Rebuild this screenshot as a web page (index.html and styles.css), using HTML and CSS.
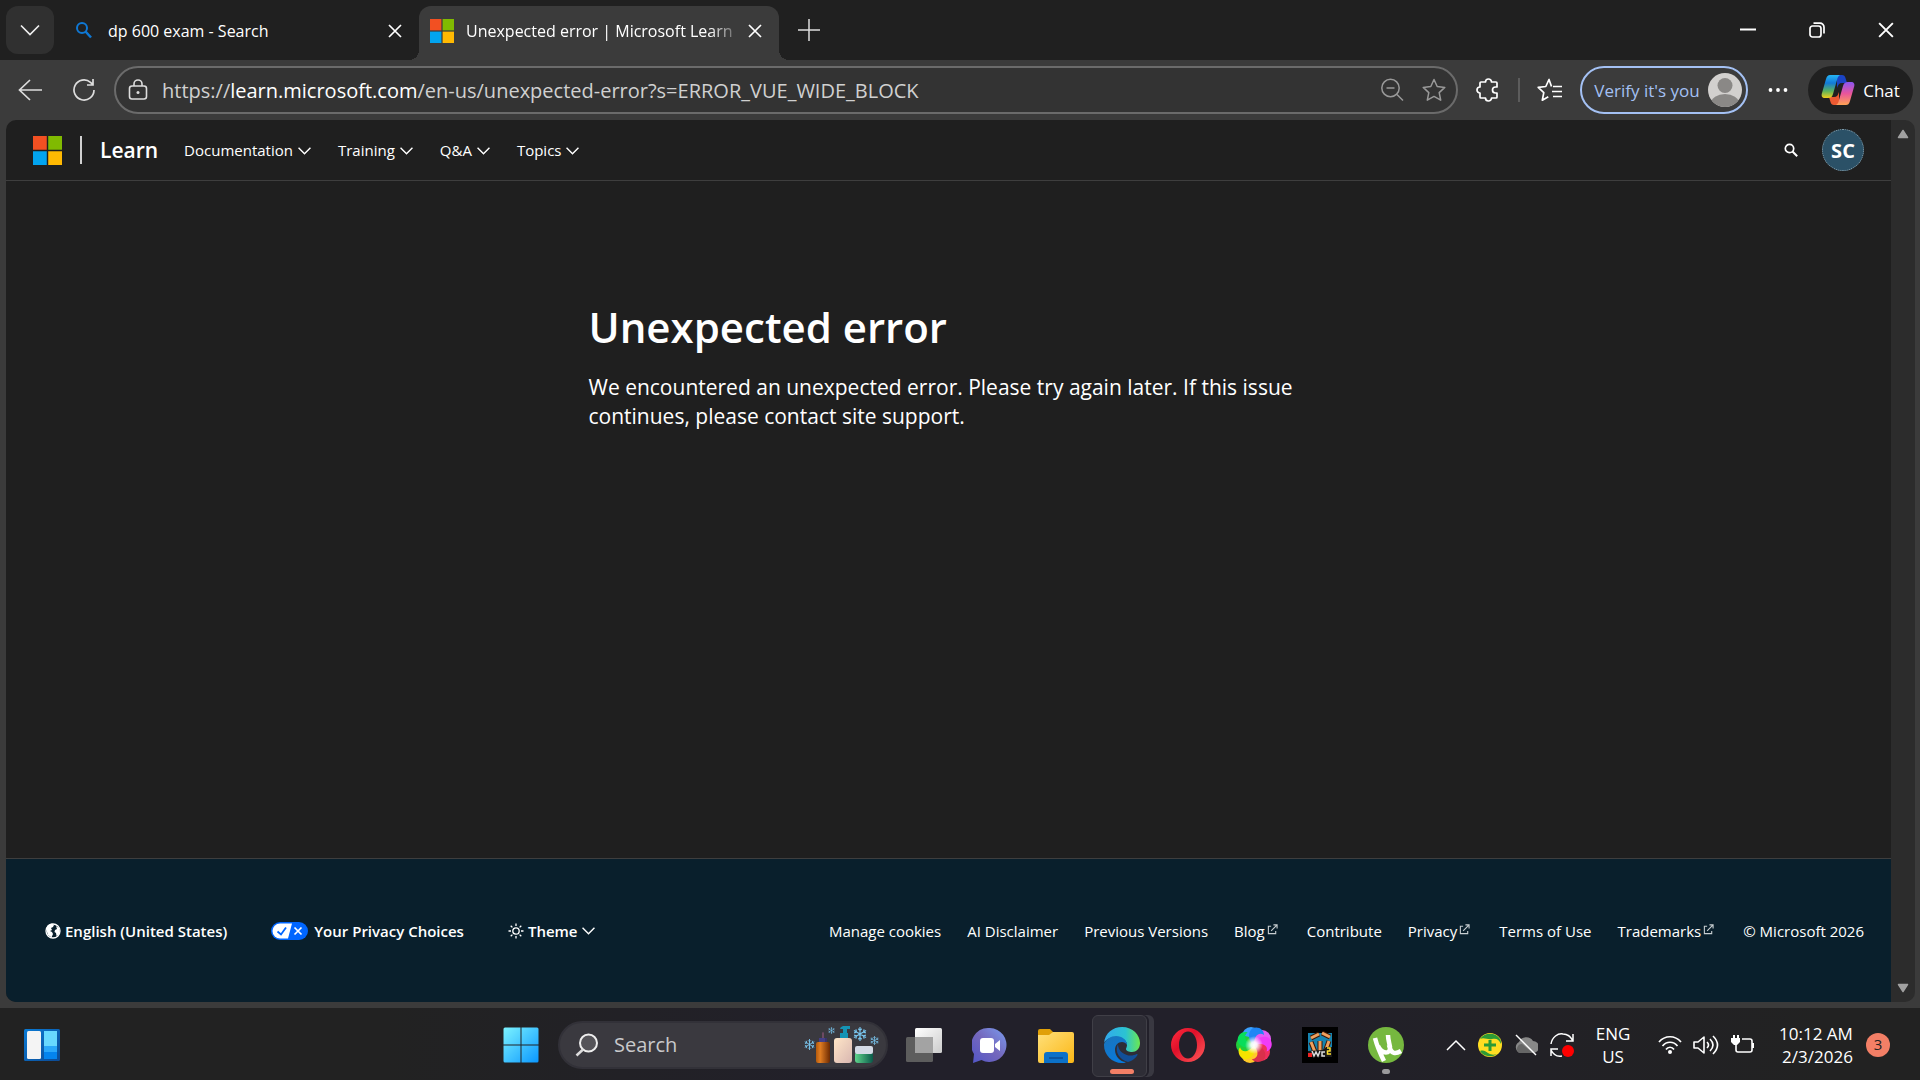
FILE: index.html
```html
<!DOCTYPE html>
<html lang="en-us">
<head>
    <meta charset="UTF-8">
    <meta name="viewport" content="width=device-width, initial-scale=1.0">
    <title>Unexpected error | Microsoft Learn</title>
    <link rel="stylesheet" href="styles.css">
</head>
<body>
    <!-- icons used more than once -->
    <svg class="sprite" width="0" height="0" aria-hidden="true">
        <symbol id="chevron" viewBox="0 0 12 12"><path d="M.5 3.500L6 9l5.500-5.500" fill="none" stroke="currentColor" stroke-width="1.300"/></symbol>
        <symbol id="close" viewBox="0 0 14 14"><path d="M1 1l12 12M13 1L1 13" fill="none" stroke="currentColor" stroke-width="1.700"/></symbol>
        <symbol id="ms-logo" viewBox="0 0 24 24">
            <path fill="#f25022" d="M0 0h11.400v11.400H0z"/><path fill="#80ba01" d="M12.600 0H24v11.400H12.600z"/>
            <path fill="#02a4ef" d="M0 12.600h11.400V24H0z"/><path fill="#ffb902" d="M12.600 12.600H24V24H12.600z"/>
        </symbol>
        <symbol id="external" viewBox="0 0 12 12"><path d="M4.500 2.500h-3v8h8v-3M7 1h4v4M11 1L4.500 7.500" fill="none" stroke="#c8ced1" stroke-width="1.200"/></symbol>
        <symbol id="snow" viewBox="0 0 12 12"><path d="M6 0v12M.8 3l10.400 6M11.200 3L.8 9M4.500 1.500L6 3l1.500-1.500M4.500 10.500L6 9l1.500 1.500M1 5l2-.7L2.500 2M11 5l-2-.7.500-2.300M1 7l2 .7-.5 2.300M11 7l-2 .7.500 2.300" fill="none" stroke="#79c6ef" stroke-width="1"/></symbol>
        <symbol id="petal" viewBox="0 0 36 36"><path d="M18 18C12 14 11 5 17 1c6-2 11 2 11 7-4-3-10-1-10 10z"/></symbol>
    </svg>

    <header class="tabs">
        <button class="tab-list" aria-label="Search tabs"><svg width="20" height="20" viewBox="0 0 20 20"><path d="M1 5.500l9 9 9-9" fill="none" stroke="#eee" stroke-width="1.700"/></svg></button>
        <div class="tab">
            <svg class="tab-icon" width="24" height="24" viewBox="0 0 24 24"><circle cx="10" cy="9" r="5" fill="none" stroke="#0f78d4" stroke-width="2"/><path d="M13.500 12.500l5.500 6" stroke="#0f78d4" stroke-width="2.500"/></svg>
            <span class="tab-title">dp 600 exam - Search</span>
            <button class="tab-close" aria-label="Close tab"><svg width="14" height="14"><use href="#close"/></svg></button>
        </div>
        <div class="tab active">
            <svg class="tab-icon" width="24" height="24"><use href="#ms-logo"/></svg>
            <span class="tab-title">Unexpected error | Microsoft Learn</span>
            <button class="tab-close" aria-label="Close tab"><svg width="14" height="14"><use href="#close"/></svg></button>
        </div>
        <button class="new-tab" aria-label="New tab"><svg width="22" height="22" viewBox="0 0 22 22"><path d="M11 0v22M0 11h22" stroke="#ddd" stroke-width="1.500"/></svg></button>
        <div class="window-buttons">
            <button aria-label="Minimize"><svg width="16" height="16" viewBox="0 0 16 16"><path d="M0 7.500h16" stroke="#fff" stroke-width="2"/></svg></button>
            <button aria-label="Restore"><svg width="16" height="16" viewBox="0 0 16 16"><rect x="1" y="4" width="11" height="11" rx="2.500" fill="none" stroke="#fff" stroke-width="1.700"/><path d="M4.500 1.200H11a4 4 0 0 1 4 4v6.300" fill="none" stroke="#fff" stroke-width="1.700"/></svg></button>
            <button aria-label="Close"><svg width="16" height="16"><use href="#close"/></svg></button>
        </div>
    </header>

    <nav class="toolbar">
        <button aria-label="Back"><svg width="24" height="24" viewBox="0 0 24 24"><path d="M24 12H1M12 2L1.500 12 12 22" fill="none" stroke="#ddd" stroke-width="1.700"/></svg></button>
        <button aria-label="Refresh"><svg width="24" height="24" viewBox="0 0 24 24"><path d="M22 12a10 10 0 1 1-3.500-7.600L21 6.500M21 1v6h-6" fill="none" stroke="#ddd" stroke-width="1.700"/></svg></button>
        <div class="address">
            <svg width="20" height="22" viewBox="0 0 20 22"><rect x="1.500" y="7" width="17" height="13" rx="2.500" fill="none" stroke="#ddd" stroke-width="1.600"/><path d="M6 7V5a4 4 0 0 1 8 0v2" fill="none" stroke="#ddd" stroke-width="1.600"/><circle cx="10" cy="13.500" r="1.500" fill="#ddd"/></svg>
            <a class="url" href="#">https://<b>learn.microsoft.com</b>/en-us/unexpected-error?s=ERROR_VUE_WIDE_BLOCK</a>
            <button aria-label="Zoom"><svg width="24" height="24" viewBox="0 0 24 24"><circle cx="10.500" cy="10" r="8.700" fill="none" stroke="#999" stroke-width="1.500"/><path d="M6.500 10h8M17 16.500l6 6" stroke="#999" stroke-width="1.500"/></svg></button>
            <button aria-label="Add to favorites"><svg width="24" height="24" viewBox="0 0 24 24"><path d="M12 1.500l3.200 7 7.600.9-5.600 5.200 1.500 7.600-6.700-3.800-6.700 3.800 1.500-7.600L1.200 9.400l7.600-.9z" fill="none" stroke="#999" stroke-width="1.500" stroke-linejoin="round"/></svg></button>
        </div>
        <button class="extensions" aria-label="Extensions"><svg width="24" height="24" viewBox="0 0 24 24"><path d="M5 4h4.500a3 3 0 0 1 6 0H20a1 1 0 0 1 1 1v4h-1.500a3 3 0 0 0 0 6H21v4a1 1 0 0 1-1 1h-4.500a3 3 0 0 1-6 0H5a1 1 0 0 1-1-1v-4a3 3 0 0 1 0-6V5a1 1 0 0 1 1-1z" fill="none" stroke="#fff" stroke-width="1.700" stroke-linejoin="round"/></svg></button>
        <span class="separator"></span>
        <button class="favorites" aria-label="Favorites"><svg width="26" height="24" viewBox="0 0 26 24"><path d="M14.500 8.500L12 1.500 8.800 8.500l-7.600.9 5.600 5.200-1.500 7.600 6-3.400M16 8.500h9M15 13.500h10M16 18.500h9" fill="none" stroke="#fff" stroke-width="1.700" stroke-linejoin="round"/></svg></button>
        <button class="verify">Verify it's you
            <svg width="34" height="34" viewBox="0 0 34 34"><defs><clipPath id="head"><circle cx="17" cy="17" r="17"/></clipPath></defs><g clip-path="url(#head)"><path fill="#d2d0ce" d="M0 0h34v34H0z"/><circle cx="17" cy="12.500" r="7.500" fill="#8a8886"/><ellipse cx="17" cy="30" rx="14" ry="9" fill="#8a8886"/></g></svg>
        </button>
        <button class="more" aria-label="Settings and more"><svg width="20" height="6" viewBox="0 0 20 6"><g fill="#fff"><circle cx="2.500" cy="3" r="1.900"/><circle cx="10" cy="3" r="1.900"/><circle cx="17.500" cy="3" r="1.900"/></g></svg></button>
        <button class="chat">
            <svg width="34" height="32" viewBox="0 0 34 32">
                <defs>
                    <linearGradient id="cp1" x1="0" y1="0" x2="0" y2="1"><stop offset="0" stop-color="#25b5f5"/><stop offset=".35" stop-color="#1279d8"/><stop offset=".7" stop-color="#5db45b"/><stop offset="1" stop-color="#f1cf1c"/></linearGradient>
                    <linearGradient id="cp2" x1="0" y1="0" x2="0" y2="1"><stop offset="0" stop-color="#8a55f2"/><stop offset=".5" stop-color="#e9559b"/><stop offset="1" stop-color="#ffa354"/></linearGradient>
                </defs>
                <path fill="#1a43c4" d="M16 1h5c2 0 3 1 3.500 3l1.500 5h-5c-3 0-4 2-5 5z"/>
                <path fill="#ed5a32" d="M18 31h-5c-2 0-3-1-3.500-3L8 23h5c3 0 4-2 5-5z"/>
                <path fill="url(#cp1)" d="M9 1h10c-2 1-2.500 3-3 5l-4 14c-1 3-2 4-5 4H4c-3 0-4-2-3-5L5 5c1-3 2-4 4-4z"/>
                <path fill="url(#cp2)" d="M25 31H15c2-1 2.500-3 3-5l4-14c1-3 2-4 5-4h3c3 0 4 2 3 5l-4 14c-1 3-2 4-4 4z"/>
            </svg>
            Chat
        </button>
    </nav>

    <div class="viewport">
        <div class="page">
            <header class="site-header">
                <a class="logo" href="#" aria-label="Microsoft"><svg width="29" height="29" viewBox="0 0 24 24"><use href="#ms-logo"/></svg></a>
                <a class="brand" href="#">Learn</a>
                <nav class="site-nav">
                    <button>Documentation <svg width="13" height="13"><use href="#chevron"/></svg></button>
                    <button>Training <svg width="13" height="13"><use href="#chevron"/></svg></button>
                    <button>Q&amp;A <svg width="13" height="13"><use href="#chevron"/></svg></button>
                    <button>Topics <svg width="13" height="13"><use href="#chevron"/></svg></button>
                </nav>
                <button class="site-search" aria-label="Search"><svg width="14" height="14" viewBox="0 0 14 14"><circle cx="5.500" cy="5.500" r="4.200" fill="none" stroke="#fff" stroke-width="1.700"/><path d="M8.500 8.500l4.700 4.700" stroke="#fff" stroke-width="2"/></svg></button>
                <button class="profile">SC</button>
            </header>

            <main class="content">
                <h1>Unexpected error</h1>
                <p>We encountered an unexpected error. Please try again later. If this issue continues, please contact site support.</p>
            </main>

            <footer class="site-footer">
                <div class="footer-options">
                    <a class="locale" href="#"><svg width="16" height="16" viewBox="0 0 16 16"><circle cx="8" cy="8" r="7" fill="none" stroke="#fff" stroke-width="1.300"/><path fill="#fff" d="M1 6l2-4 4-1.500L9 2 8 4 6 5l1 2-2 1 2 1 1 2-1.500 3.500L3 12 2 9zM11 3l3 2 .8 3-1.300 4-2 1-.5-3-1.500-1L10 7l2-1z"/></svg>English (United States)</a>
                    <a class="privacy" href="#"><svg width="37" height="18" viewBox="0 0 37 18"><rect width="37" height="18" rx="9" fill="#06f"/><path fill="#fff" d="M9 1.500h12l-4 15H9a7.500 7.500 0 0 1 0-15z"/><path d="M6.500 9.500L10 12.500l5-7" fill="none" stroke="#06f" stroke-width="1.800"/><path d="M23.500 5.500l7 7M30.500 5.500l-7 7" stroke="#fff" stroke-width="1.700"/></svg>Your Privacy Choices</a>
                    <button class="theme"><svg width="16" height="16" viewBox="0 0 16 16"><circle cx="8" cy="8" r="3.200" fill="none" stroke="#fff" stroke-width="1.300"/><path d="M8 .5V3M8 13v2.500M.5 8H3M13 8h2.500M2.700 2.700l1.700 1.700M11.600 11.600l1.700 1.700M2.700 13.300l1.700-1.700M11.600 4.400l1.700-1.700" stroke="#fff" stroke-width="1.300"/></svg>Theme<svg width="13" height="13"><use href="#chevron"/></svg></button>
                </div>
                <ul class="footer-links">
                    <li><a href="#">Manage cookies</a></li>
                    <li><a href="#">AI Disclaimer</a></li>
                    <li><a href="#">Previous Versions</a></li>
                    <li><a href="#">Blog<svg width="11" height="11"><use href="#external"/></svg></a></li>
                    <li><a href="#">Contribute</a></li>
                    <li><a href="#">Privacy<svg width="11" height="11"><use href="#external"/></svg></a></li>
                    <li><a href="#">Terms of Use</a></li>
                    <li><a href="#">Trademarks<svg width="11" height="11"><use href="#external"/></svg></a></li>
                    <li>© Microsoft 2026</li>
                </ul>
            </footer>
        </div>
        <div class="scrollbar">
            <svg width="12" height="10" viewBox="0 0 12 10"><path d="M6 1.500l4.500 7h-9z" fill="#a0a0a0" stroke="#a0a0a0" stroke-width="1.500" stroke-linejoin="round"/></svg>
            <svg width="12" height="10" viewBox="0 0 12 10"><path d="M6 8.500l4.500-7h-9z" fill="#a0a0a0" stroke="#a0a0a0" stroke-width="1.500" stroke-linejoin="round"/></svg>
        </div>
    </div>

    <footer class="taskbar">
        <div class="task-left">
            <button class="widgets" aria-label="Widgets">
                <svg width="36" height="32" viewBox="0 0 36 32"><defs><linearGradient id="wd" x1="0" y1="0" x2="1" y2="1"><stop offset="0" stop-color="#0a7bd6"/><stop offset="1" stop-color="#0c4a94"/></linearGradient></defs><rect width="36" height="32" rx="1.500" fill="url(#wd)"/><rect x="3" y="2" width="14" height="28" rx="1.500" fill="#f4f4f4"/><path fill="#68d9ff" d="M20 2h13v15H20z"/><path fill="#2aa8fa" d="M20 17h13v6H20z"/><path fill="#0484ee" d="M20 23h13v7H20z"/></svg>
            </button>
        </div>

        <div class="task-apps">
            <button class="app" aria-label="Start">
                <svg width="36" height="36" viewBox="0 0 36 36"><defs><linearGradient id="win" x1="0" y1="0" x2="1" y2="1"><stop offset="0" stop-color="#7cf3ff"/><stop offset="1" stop-color="#0a97ff"/></linearGradient></defs><path fill="url(#win)" d="M2 .5h15.500v17H.5V2A1.500 1.500 0 0 1 2 .5zM18.500.5H34A1.500 1.500 0 0 1 35.500 2v15.500h-17zM.5 18.500h17v17H2A1.500 1.500 0 0 1 .5 34zM18.500 18.500h17V34a1.500 1.500 0 0 1-1.500 1.500H18.500z"/></svg>
            </button>
            <label class="task-search">
                <svg width="24" height="24" viewBox="0 0 24 24"><circle cx="13.500" cy="10" r="8.500" fill="#555459" stroke="#eee" stroke-width="2"/><path d="M8 16.500l-6.500 6" stroke="#ddd" stroke-width="2.500"/></svg>
                <input type="text" placeholder="Search" aria-label="Search">
                <svg width="76" height="38" viewBox="0 0 76 38">
                    <defs>
                        <linearGradient id="amber"><stop offset="0" stop-color="#b45a0c"/><stop offset=".3" stop-color="#e07d22"/><stop offset="1" stop-color="#6d2a02"/></linearGradient>
                        <linearGradient id="cream" x2="1" y2="1"><stop offset="0" stop-color="#ffe6c8"/><stop offset="1" stop-color="#d9b7b1"/></linearGradient>
                        <linearGradient id="jar"><stop offset="0" stop-color="#5fd48c"/><stop offset="1" stop-color="#0a5a4a"/></linearGradient>
                    </defs>
                    <path fill="#443f86" d="M15 17v-5h3v5zM18 12h3v5h-3z"/><path fill="#38336b" d="M21 12h2v5h-2z"/><path fill="#6d4a62" d="M18 12V7q1-2 2 0v5z"/>
                    <rect x="12" y="16" width="14" height="21" rx="2" fill="url(#amber)"/>
                    <path fill="#1594b5" d="M36 13V7h3V3h-3q0-2 3-3h7v3h-3v4h1v6z"/><rect x="30" y="12" width="18" height="25" rx="3" fill="url(#cream)"/>
                    <rect x="51" y="26" width="18" height="11" rx="3" fill="url(#jar)"/><rect x="51" y="20" width="18" height="8" rx="2" fill="#d4dae6"/>
                    <use href="#snow" x="0" y="13" width="11" height="11"/><use href="#snow" x="24" y="1" width="7" height="7"/>
                    <use href="#snow" x="49" y="1" width="14" height="14"/><use href="#snow" x="66" y="10" width="9" height="9"/>
                </svg>
            </label>
            <button class="app" aria-label="Task view">
                <svg width="36" height="36" viewBox="0 0 36 36"><defs><linearGradient id="tv" x1="0" y1="0" x2="1" y2="1"><stop offset="0" stop-color="#fff"/><stop offset="1" stop-color="#ccc"/></linearGradient></defs><rect x="9" y="1" width="27" height="25" rx="1.500" fill="url(#tv)"/><rect y="10" width="27" height="25" rx="1.500" fill="#5d5d5d"/><path fill="#a3a3a3" d="M9 10h18v16H9z"/></svg>
            </button>
            <button class="app" aria-label="Chat">
                <svg width="36" height="36" viewBox="0 0 36 36"><defs><linearGradient id="tc" x1="0" y1="1" x2="1" y2="0"><stop offset="0" stop-color="#5155c8"/><stop offset=".5" stop-color="#7467bc"/><stop offset="1" stop-color="#7a9cf0"/></linearGradient></defs><path fill="url(#tc)" d="M18 1a17 17 0 1 1-8.500 32L1 36l1-9A17 17 0 0 1 18 1z"/><rect x="8" y="11" width="14" height="15" rx="3" fill="#fff"/><path fill="#fff" d="M23 17l5-4v11l-5-4z"/></svg>
            </button>
            <button class="app" aria-label="File Explorer">
                <svg width="36" height="36" viewBox="0 0 36 36"><defs><linearGradient id="fe" x1="0" y1="0" x2="1" y2="1"><stop offset="0" stop-color="#ffe07a"/><stop offset="1" stop-color="#fbb716"/></linearGradient></defs><path fill="#e0a008" d="M0 4a2 2 0 0 1 2-2h10l3 3v6H0z"/><path fill="url(#fe)" d="M0 8h11l4-3h19a2 2 0 0 1 2 2v27a2 2 0 0 1-2 2H2a2 2 0 0 1-2-2z"/><path fill="#0c71c8" d="M6 36v-8a3 3 0 0 1 3-3h18a3 3 0 0 1 3 3v8z"/><path d="M11 31h14" stroke="#0a4c95" stroke-width="1.500"/></svg>
            </button>
            <button class="app running" aria-label="Microsoft Edge">
                <svg width="36" height="36" viewBox="0 0 36 36">
                    <defs>
                        <linearGradient id="e1"><stop offset="0" stop-color="#32a9ee"/><stop offset=".6" stop-color="#2bc3d2"/><stop offset="1" stop-color="#6be850"/></linearGradient>
                        <linearGradient id="e2" x1="0" y1="0" x2=".5" y2="1"><stop offset="0" stop-color="#1b74ba"/><stop offset="1" stop-color="#087adc"/></linearGradient>
                    </defs>
                    <path fill="url(#e1)" d="M0 16C1 6 9 0 18 0c11 0 18 8 18 16 0 6-4 9-8 9-3 0-6-1-6-3 0-1 1-2 1-4 0-4-4-8-10-8C7 10 2 12 0 16z"/>
                    <path fill="url(#e2)" d="M0 17c2-5 7-8 12-8 6 0 11 4 11 9-1-2-3-3-5-3-4 0-7 3-7 8 0 6 5 12 11 12-1 1-3 1-4 1C8 36 0 28 0 18z"/>
                    <path fill="#114f98" d="M14 17c-4 8 2 16 10 18 4-1 8-4 9.500-7 .3-.8-.3-1.300-1-.9C26 31 14 27 14 17z"/>
                </svg>
            </button>
            <button class="app" aria-label="Opera">
                <svg width="36" height="36" viewBox="0 0 36 36"><defs><linearGradient id="op" x1="0" y1="0" x2="1" y2="1"><stop offset="0" stop-color="#ff2f40"/><stop offset=".4" stop-color="#e0102a"/><stop offset="1" stop-color="#ff5a5a"/></linearGradient></defs><path fill="url(#op)" fill-rule="evenodd" d="M18 1a17 17 0 1 1 0 34 17 17 0 0 1 0-34zm0 3.500c-5 0-9 6-9 13.500s4 13.500 9 13.500 9-6 9-13.500-4-13.500-9-13.500z"/></svg>
            </button>
            <button class="app" aria-label="Color picker">
                <svg width="36" height="36" viewBox="0 0 36 36">
                    <defs><radialGradient id="glow"><stop offset="0" stop-color="#fff"/><stop offset=".35" stop-color="#fff" stop-opacity=".9"/><stop offset="1" stop-color="#fff" stop-opacity="0"/></radialGradient></defs>
                    <circle cx="15" cy="9" r="9" fill="#3aa0ff"/><circle cx="26" cy="12" r="9" fill="#e65cf5"/><circle cx="25" cy="25" r="9" fill="#ef2f5c"/>
                    <circle cx="14" cy="27" r="9" fill="#ffc928"/><circle cx="9" cy="18" r="9" fill="#22cf3a"/>
                    <use href="#petal" width="36" height="36" fill="#1f86f5"/><use href="#petal" width="36" height="36" fill="#f03cf8" transform="rotate(72 18 18)"/><use href="#petal" width="36" height="36" fill="#d9304b" transform="rotate(144 18 18)"/>
                    <use href="#petal" width="36" height="36" fill="#f4e300" transform="rotate(216 18 18)"/><use href="#petal" width="36" height="36" fill="#08dd5a" transform="rotate(288 18 18)"/>
                    <circle cx="18" cy="18" r="9" fill="url(#glow)"/>
                </svg>
            </button>
            <button class="app" aria-label="WCC2">
                <svg width="36" height="36" viewBox="0 0 36 36"><path d="M0 0h36v36H0z"/><path fill="#1684b0" d="M6 6h24v24H6z"/><path d="M9 15l4 10M18 14v11M27 14l-4 11" stroke="#3b1705" stroke-width="5"/><path d="M9 15l4 10M18 14v11M27 14l-4 11" stroke="#efa05e" stroke-width="3"/><path d="M9 11l8-4M20 6l8 4" stroke="#3b1705" stroke-width="5"/><path d="M9 11l8-4M20 6l8 4" stroke="#efa05e" stroke-width="3"/><path fill="#181818" d="M6 24l15-1 3-3h6v10H6z"/><path d="M10 24l2 5 2-4 2 4 2-5M23 25h-3v4h3" fill="none" stroke="#ddd" stroke-width="1.500"/><path d="M25 21h3v3h-2.500v3H29" fill="none" stroke="#ffe12e" stroke-width="1.500"/><path d="M6 28h4" stroke="#e22" stroke-width="4"/></svg>
            </button>
            <button class="app idle" aria-label="uTorrent">
                <svg width="36" height="36" viewBox="0 0 36 36"><circle cx="18" cy="18" r="18" fill="#76b83f"/><path d="M7 11c2 8 5 15 9 23M10 19c4 9 13 8 12 1-1-5-2-8-2-12M21 18c2 10 7 9 12 6" fill="none" stroke="#fff" stroke-width="4.500"/></svg>
            </button>
        </div>

        <div class="tray">
            <button aria-label="Show hidden icons"><svg width="20" height="12" viewBox="0 0 20 12"><path d="M1 11l9-9 9 9" fill="none" stroke="#fff" stroke-width="1.500"/></svg></button>
            <button aria-label="Security"><svg width="24" height="24" viewBox="0 0 24 24"><circle cx="12" cy="12" r="12" fill="#fd2"/><path fill="#2c9a36" d="M2 6A12 12 0 0 1 22 6c1 2 1 3 1 5-2-5-5-6-9-5S6 4 2 6zM19 21A12 12 0 0 1 2 18c4-1 5 0 8 2s6 2 9 1zM10.500 7h3v3.500H18v3h-4.500V18h-3v-4.500H6v-3h4.500z"/></svg></button>
            <button aria-label="OneDrive"><svg width="24" height="24" viewBox="0 0 24 24"><path fill="#888" d="M6 20a6 6 0 0 1-1-11 8 8 0 0 1 14-1 6 6 0 0 1 0 12z"/><path fill="#666" d="M5 20a5 5 0 0 1 3-9l11 9z"/><path d="M2 2l20 20" stroke="#fff" stroke-width="1.500"/></svg></button>
            <button aria-label="Updates"><svg width="24" height="24" viewBox="0 0 24 24"><path d="M1 11C2 4 8 0 13 1c5 0 8 3 10 7M23 1v7h-7M1 23v-7h7M1 17c2 4 6 7 11 6" fill="none" stroke="#fff" stroke-width="1.500"/><circle cx="18" cy="18" r="6" fill="#f00"/></svg></button>
            <button class="lang">ENG<br>US</button>
            <button class="system" aria-label="Network, volume and battery">
                <svg width="24" height="20" viewBox="0 0 24 20"><path d="M1 7c6-7 16-7 22 0M4.500 11c4-5 11-5 15 0M8 14.500c2-3 6-3 8 0" fill="none" stroke="#fff" stroke-width="1.700"/><circle cx="12" cy="17" r="2" fill="#fff"/></svg>
                <svg width="26" height="20" viewBox="0 0 26 20"><path d="M1 7h4l6-5v16l-6-5H1zM14 7c2 2 2 4 0 6M17 4c4 4 4 8 0 12M20 1c6 6 6 12 0 18" fill="none" stroke="#fff" stroke-width="1.600" stroke-linejoin="round"/></svg>
                <svg width="26" height="20" viewBox="0 0 26 20"><path d="M12 4h8a2 2 0 0 1 2 2v9a2 2 0 0 1-2 2H8a2 2 0 0 1-2-2V9" fill="none" stroke="#fff" stroke-width="1.600"/><path fill="#fff" d="M22 8h2v5h-2zM1 3h2V0h2v3h2V0h2v3h1v4L7 10H4L1 7z"/></svg>
            </button>
            <button class="clock">10:12 AM<br>2/3/2026</button>
            <button class="badge" aria-label="Notifications">3</button>
        </div>
    </footer>
</body>
</html>
```
FILE: styles.css
```css
* {
    box-sizing: border-box;
}
body {
    font-family: "Segoe UI", "Open Sans", "Noto Sans", sans-serif;
    background-color: #3b3b3b;
    color: #fff;
    margin: 0;
    min-height: 100vh;
    display: flex;
    flex-direction: column;
}
button {
    font: inherit;
    color: inherit;
    background: none;
    border: none;
    padding: 0;
    cursor: pointer;
    display: flex;
    align-items: center;
    justify-content: center;
    white-space: nowrap;
}
a {
    color: inherit;
    text-decoration: none;
}
svg {
    display: block;
    flex: none;
}
.sprite {
    position: absolute;
}

/* tab strip */
.tabs {
    height: 60px;
    background-color: #202020;
    display: flex;
    align-items: center;
    padding-left: 6px;
}
.tab-list {
    width: 48px;
    height: 48px;
    background-color: #303030;
    border-radius: 12px;
}
.tab {
    width: 360px;
    height: 54px;
    align-self: flex-end;
    display: flex;
    align-items: center;
    gap: 12px;
    padding: 0 17px 4px 11px;
    font-size: 16px;
    position: relative;
}
.tab:not(.active) {
    width: 365px;
    padding-left: 18px;
}
.tab.active {
    background-color: #3b3b3b;
    border-radius: 12px 12px 0 0;
}
.tab.active::before,
.tab.active::after {
    content: "";
    position: absolute;
    bottom: 0;
    width: 10px;
    height: 10px;
}
.tab.active::before {
    left: -10px;
    background: radial-gradient(circle at 0 0, transparent 10px, #3b3b3b 10px);
}
.tab.active::after {
    right: -10px;
    background: radial-gradient(circle at 100% 0, transparent 10px, #3b3b3b 10px);
}
.tab-title {
    flex: 1;
    white-space: nowrap;
}
.tab.active .tab-title {
    mask-image: linear-gradient(to right, #000 90%, rgba(0, 0, 0, 0.2));
}
.new-tab {
    width: 60px;
    height: 48px;
}
.window-buttons {
    margin-left: auto;
    display: flex;
    height: 100%;
}
.window-buttons button {
    width: 69px;
}

/* toolbar */
.toolbar {
    height: 60px;
    display: flex;
    align-items: center;
    padding: 0 7px 0 3px;
}
.toolbar > button {
    width: 54px;
    height: 48px;
}
.address {
    flex: 1;
    height: 48px;
    margin-left: 3px;
    padding: 0 8px 0 12px;
    background-color: #333;
    border: 2px solid #6b6b6b;
    border-radius: 24px;
    display: flex;
    align-items: center;
    gap: 14px;
}
.address button {
    width: 28px;
}
.url {
    flex: 1;
    font-size: 20px;
    color: #d0d0d0;
}
.url b {
    font-weight: 400;
    color: #fff;
}
.toolbar > .extensions {
    width: 60px;
}
.separator {
    width: 2px;
    height: 24px;
    background-color: #5c5c5c;
}
.toolbar > .favorites {
    width: 60px;
}
.toolbar > .verify {
    width: 168px;
    padding-left: 8px;
    border: 2px solid #a4c1f4;
    border-radius: 24px;
    color: #a4c1f4;
    font-size: 17px;
    gap: 8px;
}
.toolbar > .more {
    width: 60px;
}
.toolbar > .chat {
    width: 105px;
    background-color: #202020;
    border-radius: 24px;
    font-size: 17px;
    gap: 8px;
}

/* page area */
.viewport {
    flex: 1;
    display: flex;
    margin: 0 5px 6px 6px;
    border-radius: 10px;
    overflow: hidden;
}
.page {
    flex: 1;
    background-color: #1f1f1f;
    display: flex;
    flex-direction: column;
}
.scrollbar {
    width: 24px;
    background-color: #2c2c2c;
    display: flex;
    flex-direction: column;
    align-items: center;
    justify-content: space-between;
    padding: 9px 0;
}
.site-header {
    height: 61px;
    border-bottom: 1px solid #3e3e3e;
    display: flex;
    align-items: center;
    padding: 0 27px;
    font-size: 15px;
}
.logo {
    padding-right: 18px;
}
.brand {
    border-left: 2px solid #d0d0d0;
    padding-left: 18px;
    font-size: 21px;
    line-height: 28px;
    font-weight: 600;
}
.site-nav {
    display: flex;
    gap: 27px;
    margin-left: 26px;
}
.site-nav button {
    gap: 5px;
}
.site-search {
    margin-left: auto;
    margin-right: 24px;
}
.profile {
    width: 42px;
    height: 42px;
    border-radius: 50%;
    background-color: #2b5167;
    border: 1px dotted #8fa7b3;
    font-size: 20px;
    font-weight: 700;
}
.content {
    flex: 1;
    width: 720px;
    margin: 0 auto;
    padding-top: 116px;
}
.content h1 {
    font-size: 42px;
    line-height: 60px;
    font-weight: 600;
    margin: 0 0 16px;
}
.content p {
    font-size: 21px;
    line-height: 29px;
    margin: 0;
}
.site-footer {
    height: 144px;
    background-color: #091f2c;
    border-top: 1px solid #3e3e3e;
    display: flex;
    align-items: center;
    justify-content: space-between;
    padding: 0 27px 0 39px;
    font-size: 15px;
}
.footer-options {
    display: flex;
    gap: 44px;
    font-weight: 600;
}
.footer-options a,
.footer-options button {
    display: flex;
    align-items: center;
    gap: 4px;
}
.footer-options .privacy {
    gap: 6px;
}
.footer-links {
    list-style: none;
    margin: 0;
    padding: 0;
    display: flex;
    gap: 26px;
}
.footer-links a {
    display: flex;
    align-items: center;
    gap: 2px;
}
.footer-links svg {
    margin: 0 3px 2px 0;
}

/* taskbar */
.taskbar {
    height: 72px;
    background: linear-gradient(to right, #222 20%, #22202a 45%, #22202a 65%, #222 95%);
    display: grid;
    grid-template-columns: 488px 1fr auto;
    align-items: center;
    padding: 1px 30px 0 0;
}
.widgets {
    margin-left: 24px;
}
.task-apps {
    display: flex;
    align-items: center;
}
.app {
    width: 66px;
    height: 60px;
    position: relative;
}
.app.running svg {
    z-index: 1;
}
.app.running::before {
    content: "";
    position: absolute;
    left: 3px;
    top: 0;
    width: 53px;
    height: 60px;
    background-color: #2e2d36;
    border: 1px solid #403f47;
    border-radius: 6px;
    box-shadow: 2px 0 0 #22202a, 7px 0 0 #393841;
}
.app.running::after,
.app.idle::after {
    content: "";
    position: absolute;
    left: 50%;
    bottom: 1px;
    height: 5px;
    border-radius: 3px;
}
.app.running::after {
    width: 24px;
    margin-left: -12px;
    background-color: #f37f66;
}
.app.idle::after {
    width: 8px;
    margin-left: -4px;
    background-color: #9a9a9c;
}
.task-search {
    width: 330px;
    height: 48px;
    margin: 0 3px 0 4px;
    padding: 0 6px 0 15px;
    background-color: #3a393f;
    border: 2px solid #323138;
    border-radius: 24px;
    display: flex;
    align-items: center;
    gap: 15px;
}
.task-search input {
    flex: 1;
    min-width: 0;
    background: none;
    border: none;
    outline: none;
    padding: 0;
    font: inherit;
    font-size: 20px;
    color: #fff;
}
.task-search input::placeholder {
    color: #c9c9cb;
}
.tray {
    display: flex;
    align-items: center;
    gap: 12px;
    font-size: 17px;
    line-height: 23px;
}
.lang {
    width: 54px;
}
.system {
    gap: 11px;
    margin-left: 6px;
}
.clock {
    width: 76px;
    margin-left: 10px;
    text-align: right;
}
.badge {
    width: 24px;
    height: 24px;
    border-radius: 50%;
    background-color: #f37f66;
    color: #222;
    font-size: 15px;
}
```
